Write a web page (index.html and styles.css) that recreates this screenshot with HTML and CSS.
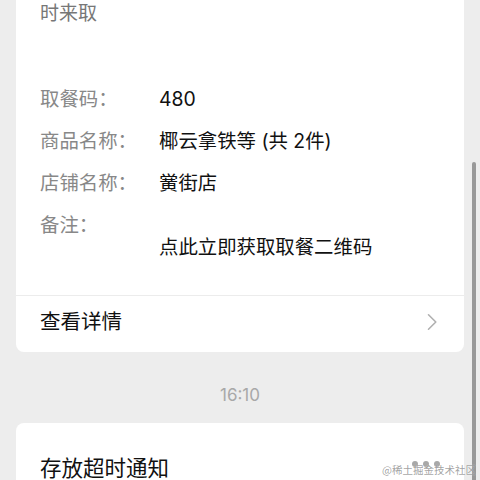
FILE: index.html
```html
<!DOCTYPE html>
<html lang="zh-CN">
<head>
<meta charset="utf-8">
<title>取餐通知</title>
<link rel="stylesheet" href="styles.css">
</head>
<body>
<div class="page">
  <section class="card card-order">
    <p class="intro">时来取</p>
    <div class="rows">
      <div class="row"><span class="label">取餐码：</span><span class="value">480</span></div>
      <div class="row"><span class="label">商品名称：</span><span class="value">椰云拿铁等 (共 2件)</span></div>
      <div class="row"><span class="label">店铺名称：</span><span class="value">黉街店</span></div>
      <div class="row"><span class="label">备注：</span><span class="value value-note">点此立即获取取餐二维码</span></div>
    </div>
    <div class="divider"></div>
    <div class="link-row">
      <span class="link-text">查看详情</span>
      <svg class="chevron" width="12" height="18" viewBox="0 0 12 18" aria-hidden="true"><path d="M2.5 1.8 L9.8 9 L2.5 16.2" fill="none" stroke="#b0b0b0" stroke-width="1.6" stroke-linecap="round" stroke-linejoin="round"/></svg>
    </div>
  </section>

  <div class="time">16:10</div>

  <section class="card card-notice">
    <div class="notice-head">
      <span class="notice-title">存放超时通知</span>
      <span class="dots"><i></i><i></i><i></i></span>
    </div>
  </section>
</div>
<div class="scrollbar"></div>
<div class="watermark">@稀土掘金技术社区</div>
</body>
</html>
```

FILE: styles.css
```css
html, body {
  margin: 0;
  height: 480px;
  overflow: hidden;
}
body {
  background: #ededed;
  font-family: "Inter", "Noto Sans CJK SC", sans-serif;
  color: #111;
  position: relative;
}
.page {
  padding: 0 16px;
}
.card {
  background: #fff;
  border-radius: 8px;
}
.card-order {
  margin-top: -20px;
  padding-top: 20px;
}
.intro {
  margin: 0;
  padding: 0 24px;
  font-size: 19px;
  line-height: 28px;
  color: #777;
}
.rows {
  padding: 0 24px;
  margin-top: 58px;
  display: flex;
  flex-direction: column;
  gap: 16px;
}
.row {
  display: flex;
  font-size: 19.4px;
  line-height: 26px;
}
.label {
  width: 119px;
  flex: none;
  color: #888;
}
.value {
  color: #111;
}
.value-note {
  padding-top: 22px;
}
.divider {
  margin-top: 35px;
  height: 1px;
  background: #ececec;
}
.link-row {
  display: flex;
  align-items: center;
  justify-content: space-between;
  padding: 12px 26px 16px 24px;
}
.link-text {
  font-size: 20.5px;
  line-height: 28px;
}
.chevron {
  display: block;
}
.time {
  text-align: center;
  font-size: 17px;
  line-height: 24px;
  color: #a8a8a8;
  margin: 31px 0 16px;
}
.card-notice {
  padding: 30px 24px 40px;
}
.notice-head {
  display: flex;
  align-items: center;
  justify-content: space-between;
}
.notice-title {
  font-size: 21.5px;
  line-height: 30px;
}
.dots {
  display: flex;
  gap: 5px;
  margin-top: -8px;
}
.dots i {
  width: 6px;
  height: 6px;
  border-radius: 50%;
  background: #a8a8a8;
}
.scrollbar {
  position: absolute;
  left: 472px;
  top: 162px;
  width: 4px;
  bottom: -10px;
  background: #999;
  border-radius: 2px;
}
.watermark {
  position: absolute;
  right: 4px;
  bottom: 3px;
  font-family: "Noto Sans CJK SC", sans-serif;
  font-size: 10.5px;
  line-height: 14px;
  color: rgba(110, 110, 110, 0.65);
  text-shadow: 0 0 1px rgba(255, 255, 255, 0.8);
}
```
